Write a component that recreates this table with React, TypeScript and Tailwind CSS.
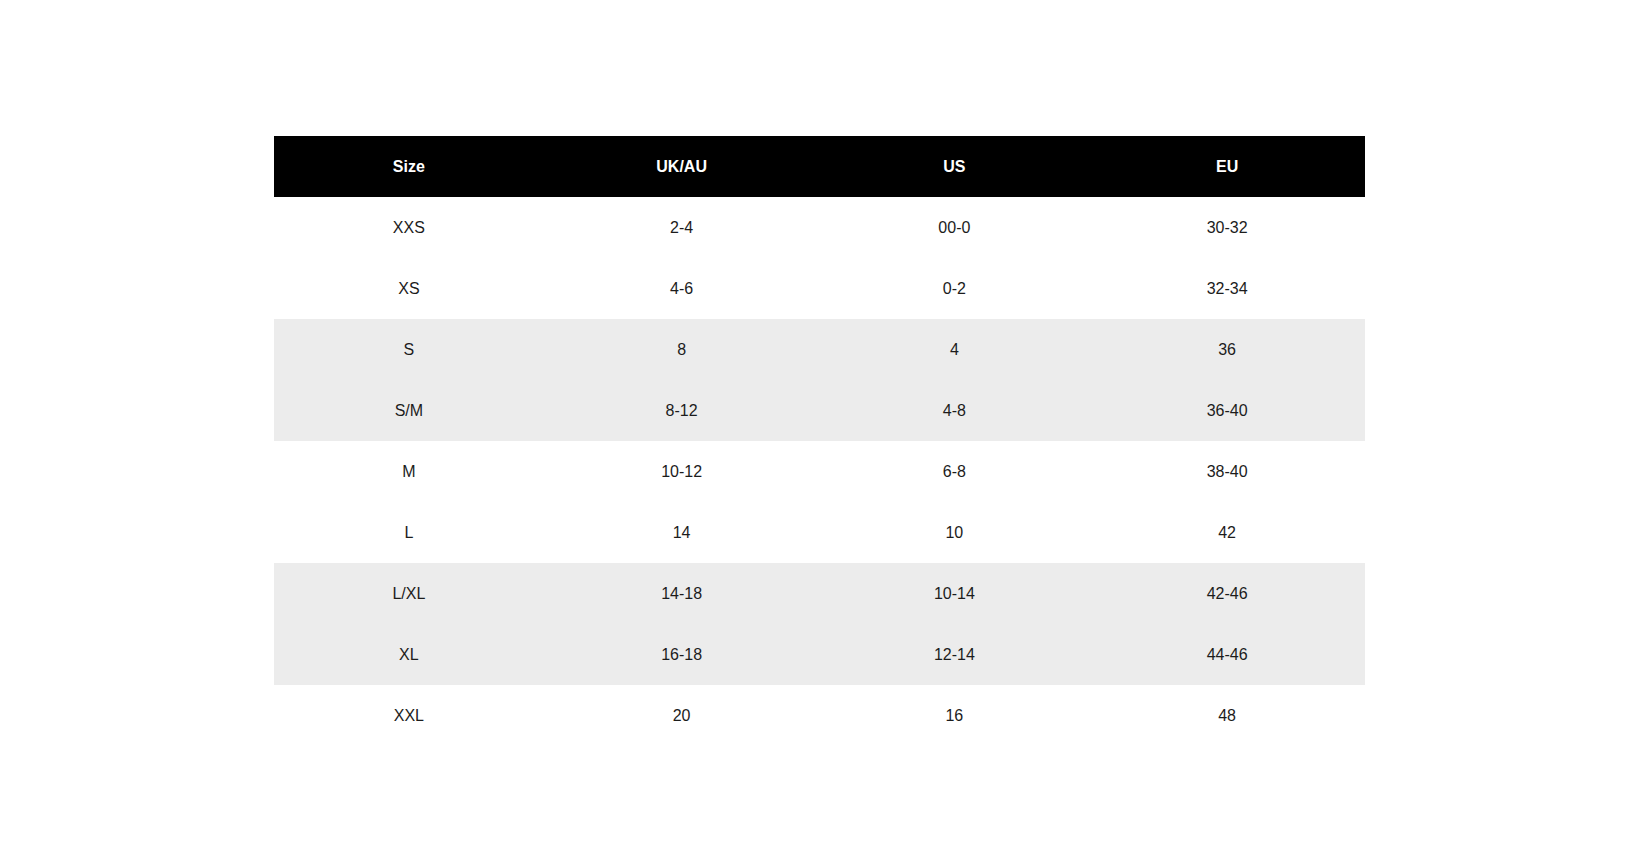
const rows = [
  { size: "XXS", uk: "2-4", us: "00-0", eu: "30-32", shaded: false },
  { size: "XS", uk: "4-6", us: "0-2", eu: "32-34", shaded: false },
  { size: "S", uk: "8", us: "4", eu: "36", shaded: true },
  { size: "S/M", uk: "8-12", us: "4-8", eu: "36-40", shaded: true },
  { size: "M", uk: "10-12", us: "6-8", eu: "38-40", shaded: false },
  { size: "L", uk: "14", us: "10", eu: "42", shaded: false },
  { size: "L/XL", uk: "14-18", us: "10-14", eu: "42-46", shaded: true },
  { size: "XL", uk: "16-18", us: "12-14", eu: "44-46", shaded: true },
  { size: "XXL", uk: "20", us: "16", eu: "48", shaded: false },
];

export default function App() {
  return (
    <div className="min-h-screen w-full bg-white pt-[136px] font-['Liberation_Sans',Arial,sans-serif]">
      <div className="ml-[274px] w-[1091px]">
        <table className="w-full table-fixed border-collapse text-center text-[16px]">
          <thead>
            <tr className="h-[61px] bg-black text-white">
              <th className="pr-[3px] font-bold">Size</th>
              <th className="pr-[3px] font-bold">UK/AU</th>
              <th className="pr-[3px] font-bold">US</th>
              <th className="pr-[3px] font-bold">EU</th>
            </tr>
          </thead>
          <tbody className="text-[#1c1c1c]">
            {rows.map((r) => (
              <tr
                key={r.size}
                className={`h-[61px] ${r.shaded ? "bg-[#ececec]" : "bg-white"}`}
              >
                <td className="pr-[3px]">{r.size}</td>
                <td className="pr-[3px]">{r.uk}</td>
                <td className="pr-[3px]">{r.us}</td>
                <td className="pr-[3px]">{r.eu}</td>
              </tr>
            ))}
          </tbody>
        </table>
      </div>
    </div>
  );
}
